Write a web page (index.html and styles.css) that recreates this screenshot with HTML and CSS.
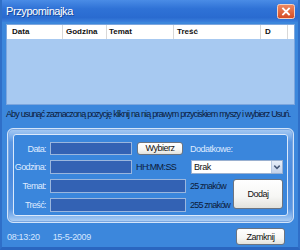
FILE: index.html
```html
<!DOCTYPE html>
<html lang="pl">
<head>
<meta charset="utf-8">
<title>Przypominajka</title>
<link rel="stylesheet" href="styles.css">
</head>
<body>
<div class="window">
  <div class="titlebar">
    <span class="title">Przypominajka</span>
    <span class="close">
      <svg width="18" height="15" viewBox="0 0 18 15">
        <defs>
          <linearGradient id="cg" x1="0" y1="0" x2="0" y2="1">
            <stop offset="0" stop-color="#f08a62"/>
            <stop offset="1" stop-color="#d44a22"/>
          </linearGradient>
        </defs>
        <rect x="0.5" y="0.5" width="17" height="14" rx="2" fill="url(#cg)" stroke="#f4d0c0"/>
        <path d="M6 4.5 L12 10.5 M12 4.5 L6 10.5" stroke="#fff" stroke-width="1.8" stroke-linecap="square"/>
      </svg>
    </span>
  </div>
  <div class="content">
    <div class="list">
      <div class="list-head">
        <div class="col c1">Data</div>
        <div class="col c2">Godzina</div>
        <div class="col c3">Temat</div>
        <div class="col c4">Treść</div>
        <div class="col c5">D</div>
      </div>
      <div class="list-body"></div>
    </div>
    <p class="hint">Aby usunąć zaznaczoną pozycję kliknij na nią prawym przyciskiem myszy i wybierz Usuń.</p>
    <div class="group">
      <div class="panel">
        <span class="lbl r1">Data:</span>
        <span class="field short r1"></span>
        <button class="btn pick r1">Wybierz</button>
        <span class="lbl-left extra r1">Dodatkowe:</span>

        <span class="lbl r2">Godzina:</span>
        <span class="field short r2"></span>
        <span class="note fmt r2">HH:MM:SS</span>
        <span class="select r2"><span class="sel-text">Brak</span><span class="sel-arrow"><svg width="11" height="12" viewBox="0 0 11 12"><path d="M2.5 4.5 L5.5 7.5 L8.5 4.5" fill="none" stroke="#4a5a78" stroke-width="1.6"/></svg></span></span>

        <span class="lbl r3">Temat:</span>
        <span class="field long r3"></span>
        <span class="note count r3">25 znaków</span>
        <button class="btn add">Dodaj</button>

        <span class="lbl r4">Treść:</span>
        <span class="field long r4"></span>
        <span class="note count r4">255 znaków</span>
      </div>
    </div>
    <div class="status">
      <span class="time">08:13:20</span>
      <span class="date">15-5-2009</span>
      <button class="btn close-btn">Zamknij</button>
    </div>
  </div>
</div>
</body>
</html>
```
FILE: styles.css
```css
* { box-sizing: border-box; }
html, body { margin: 0; padding: 0; }
body {
  font-family: "Liberation Sans", Arial, sans-serif;
  background: #3c87dc;
}
.window {
  width: 300px;
  height: 250px;
  display: flex;
  flex-direction: column;
  background: #3c87dc;
  border-left: 2px solid #2f6fc8;
  border-right: 2px solid #2f6fc8;
  border-bottom: 3px solid #2a66c0;
  overflow: hidden;
}
.titlebar {
  height: 22px;
  flex: none;
  display: flex;
  align-items: center;
  justify-content: space-between;
  background: linear-gradient(180deg, #4a8ce6 0%, #2f72d6 40%, #2a6bd0 80%, #3a7fdc 100%);
  margin: 0 -2px;
  padding-left: 6px;
  padding-right: 5px;
}
.title {
  color: #fff;
  font-size: 11px;
  letter-spacing: -0.4px;
  text-shadow: 1px 1px 0 #1a4a9c;
}
.close { display: flex; margin-top: 1px; }
.content {
  flex: 1;
  display: flex;
  flex-direction: column;
  padding: 2px 3px 0 4px;
}
.list {
  height: 81px;
  border: 1px solid #7ca6de;
  background: #a7c9f1;
  display: flex;
  flex-direction: column;
}
.list-head {
  height: 14px;
  display: flex;
  background: #fff;
  font-size: 8px;
  font-weight: bold;
  color: #111;
}
.col {
  height: 14px;
  line-height: 14px;
  border-right: 1px solid #d8d8d8;
  padding-left: 4px;
  white-space: nowrap;
}
.c1 { width: 56px; padding-left: 5px; }
.c2 { width: 44px; padding-left: 3px; }
.c3 { width: 67px; padding-left: 2px; }
.c4 { width: 87px; padding-left: 3px; }
.c5 { width: 27px; padding-left: 4px; }
.list-body { flex: 1; }
.hint {
  margin: 3px 0 0 0;
  height: 12px;
  line-height: 12px;
  font-size: 9px;
  letter-spacing: -0.9px;
  word-spacing: 0.3px;
  color: #0c1a38;
  white-space: nowrap;
}
.group {
  margin: 8px 1px 0 1px;
  height: 95px;
  border: 1px solid #d2e4fa;
  border-radius: 6px;
  padding: 5px 5px 6px 5px;
  background: linear-gradient(180deg, #a8cbf3 0%, #7eb0ec 8%, #5b97e2 14%, #4a8ade 50%, #5b97e2 86%, #8ab8ee 94%, #b4d2f4 100%);
  box-shadow: inset 0 0 0 1px #7aa6e0;
}
.panel {
  height: 100%;
  border: 1px solid #dbe9fb;
  border-radius: 3px;
  background: #3a86dc;
  display: grid;
  grid-template-columns: 32px 4px 82px 5px 49px 4px 93px;
  grid-template-rows: 13px 14px 14px 14px;
  row-gap: 5px;
  padding: 7px 0 0 0;
  font-size: 9px;
}
.r1 { grid-row: 1; }
.r2 { grid-row: 2; }
.r3 { grid-row: 3; }
.r4 { grid-row: 4; }
.lbl {
  grid-column: 1;
  justify-self: end;
  text-align: right;
  color: #dfeaff;
  align-self: center;
  letter-spacing: -0.6px;
  white-space: nowrap;
}
.field {
  background: #3362b4;
  border: 1px solid #9ab6de;
}
.field.short { grid-column: 3; }
.field.long { grid-column: 3 / 6; }
.btn {
  font-family: "Liberation Sans", Arial, sans-serif;
  font-size: 9px;
  letter-spacing: -0.5px;
  color: #111;
  background: linear-gradient(180deg, #ffffff 0%, #f6f6f4 60%, #e2e2dc 100%);
  border: 1px solid #6c7480;
  border-radius: 3px;
  padding: 0;
  margin: 0;
}
.pick { grid-column: 5; width: 46px; height: 13px; line-height: 11px; }
.lbl-left {
  color: #dfeaff;
  align-self: center;
  letter-spacing: -0.5px;
  white-space: nowrap;
}
.extra { grid-column: 7; }
.note {
  color: #0c1a38;
  align-self: center;
  letter-spacing: -0.6px;
  white-space: nowrap;
}
.fmt { grid-column: 5; margin-left: -1px; }
.count { grid-column: 7; letter-spacing: -0.8px; }
.select {
  grid-column: 7;
  margin-left: 1px;
  height: 14px;
  background: #fff;
  border: 1px solid #9ab0d0;
  display: flex;
  align-items: center;
  justify-content: space-between;
  padding-left: 2px;
}
.sel-text { color: #111; letter-spacing: -0.4px; }
.sel-arrow {
  width: 11px;
  height: 12px;
  background: linear-gradient(180deg, #e8eef8, #c4d2ea);
  border-left: 1px solid #b8c8e0;
  display: flex;
}
.add {
  grid-column: 7;
  grid-row: 3 / 5;
  justify-self: end;
  width: 50px;
  height: 30px;
}
.status {
  margin-top: 5px;
  height: 17px;
  display: flex;
  align-items: center;
  font-size: 9px;
  color: #d4e6ff;
  letter-spacing: -0.3px;
}
.time { margin-left: 1px; }
.date { margin-left: 13px; }
.close-btn {
  margin-left: auto;
  margin-right: 10px;
  width: 49px;
  height: 17px;
}
```
